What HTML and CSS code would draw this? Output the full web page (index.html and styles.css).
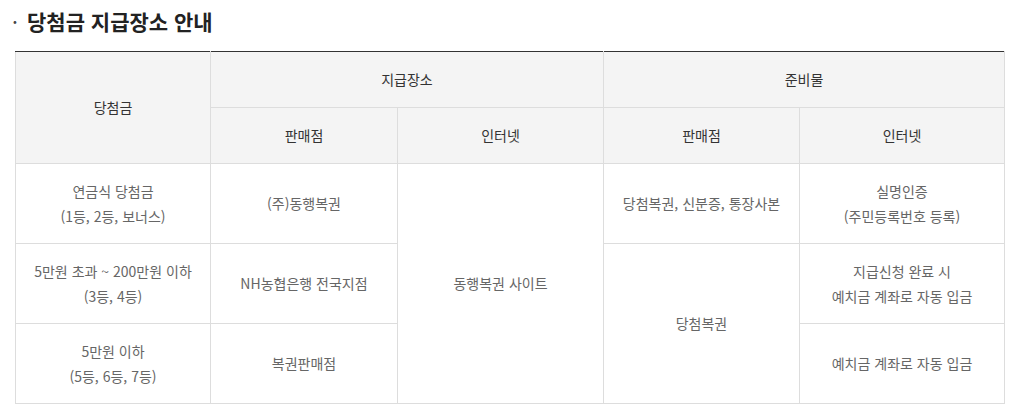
FILE: index.html
```html
<!DOCTYPE html>
<html lang="ko">
<head>
<meta charset="utf-8">
<link rel="stylesheet" href="styles.css">
</head>
<body>
<div class="wrap">
  <h2 class="title"><span class="dot">·</span>당첨금 지급장소 안내</h2>
  <table class="tbl">
    <colgroup>
      <col class="c1"><col class="c2"><col class="c3"><col class="c4"><col class="c5">
    </colgroup>
    <thead>
      <tr class="h1">
        <th rowspan="2">당첨금</th>
        <th colspan="2">지급장소</th>
        <th colspan="2">준비물</th>
      </tr>
      <tr class="h2">
        <th>판매점</th>
        <th>인터넷</th>
        <th>판매점</th>
        <th>인터넷</th>
      </tr>
    </thead>
    <tbody>
      <tr>
        <td>연금식 당첨금<br>(1등, 2등, 보너스)</td>
        <td>(주)동행복권</td>
        <td rowspan="3">동행복권 사이트</td>
        <td>당첨복권, 신분증, 통장사본</td>
        <td>실명인증<br>(주민등록번호 등록)</td>
      </tr>
      <tr>
        <td>5만원 초과 ~ 200만원 이하<br>(3등, 4등)</td>
        <td>NH농협은행 전국지점</td>
        <td rowspan="2">당첨복권</td>
        <td>지급신청 완료 시<br>예치금 계좌로 자동 입금</td>
      </tr>
      <tr>
        <td>5만원 이하<br>(5등, 6등, 7등)</td>
        <td>복권판매점</td>
        <td>예치금 계좌로 자동 입금</td>
      </tr>
    </tbody>
  </table>
</div>
</body>
</html>
```

FILE: styles.css
```css
* { box-sizing: border-box; }
html, body { margin: 0; padding: 0; background: #fff; }
body {
  font-family: "Noto Sans CJK KR", "Noto Sans", sans-serif;
  color: #333;
}
.wrap { padding: 6px 9px 0 15px; }
.title {
  margin: 0 0 15px 0;
  font-size: 21px;
  font-weight: 700;
  color: #222;
  line-height: 30px;
  letter-spacing: 0;
}
.dot {
  display: inline-block;
  width: 15px;
  margin-left: -3px;
  font-weight: 400;
  color: #444;
}
.tbl {
  width: 989px;
  border-collapse: collapse;
  table-layout: fixed;
  border-top: 1px solid #333;
  font-size: 14px;
  letter-spacing: 0;
}
.c1 { width: 195px; }
.c2 { width: 187px; }
.c3 { width: 206px; }
.c4 { width: 196px; }
.c5 { width: 205px; }
.tbl th, .tbl td {
  border: 1px solid #ddd;
  text-align: center;
  vertical-align: middle;
  padding: 0 6px;
  line-height: 25px;
}
.tbl th {
  background: #f4f4f4;
  font-weight: 400;
  color: #333;
}
.tbl thead tr:first-child th { border-top: 1px solid #333; }
.h1 { height: 56px; }
.h2 { height: 56px; }
.tbl td { color: #666; }
.tbl tbody tr { height: 80px; }
```
